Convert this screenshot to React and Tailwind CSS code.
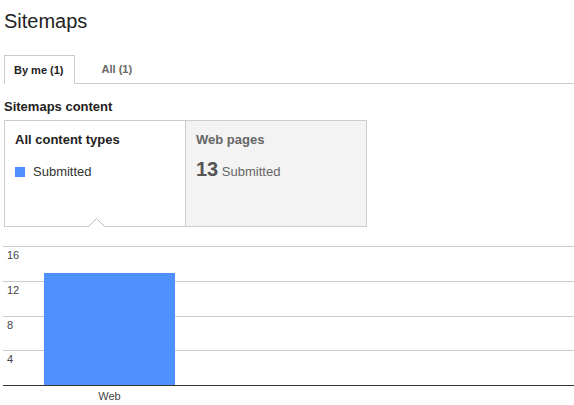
import React from 'react';

const rows = [
  { label: '16', h: 'h-[35px]' },
  { label: '12', h: 'h-[35px]' },
  { label: '8', h: 'h-[34px]' },
  { label: '4', h: 'h-[35px]' },
];

const max = 16;
const value = 13;
const plotHeight = 139;

const App = () => (
  <div className="w-[574px] h-[405px] bg-white overflow-hidden font-['Liberation_Sans',Arial,sans-serif] text-[#333]">
    <h1 className="ml-[4px] pt-[10px] text-[20px] leading-[23px] font-normal text-[#222]">Sitemaps</h1>

    <div className="mt-[22px] ml-[4px] flex items-end border-b border-[#ccc]">
      <div className="relative -mb-px bg-white border border-b-0 border-[#ccc] pl-[9px] pr-[10px] leading-[28px] text-[11px] font-bold text-[#222]">
        By me (1)
      </div>
      <div className="ml-[18px] px-[9px] leading-[28px] text-[11px] font-bold text-[#666]">All (1)</div>
    </div>

    <h2 className="mt-[15px] ml-[4px] text-[13px] leading-[15px] font-bold text-[#222]">Sitemaps content</h2>

    <div className="relative mt-[6px] ml-[4px] w-[363px] h-[107px] border border-[#ccc] flex">
      <div className="w-[181px] border-r border-[#ccc] px-[10px] pt-[11px] bg-white">
        <div className="text-[13px] leading-[15px] font-bold text-[#222]">All content types</div>
        <div className="mt-[17px] flex items-center">
          <span className="w-[10px] h-[10px] bg-[#4d90fe] mr-[8px]" />
          <span className="text-[13px] leading-[15px] text-[#333]">Submitted</span>
        </div>
      </div>
      <div className="flex-1 bg-[#f3f3f3] px-[10px] pt-[11px]">
        <div className="text-[13px] leading-[15px] font-bold text-[#666]">Web pages</div>
        <div className="mt-[11px] text-[20px] leading-[23px] font-bold text-[#555]">
          13<span className="text-[13px] font-normal text-[#666]"> Submitted</span>
        </div>
      </div>
      <svg className="absolute left-[83px] bottom-[-1px]" width="17" height="9" viewBox="0 0 17 9">
        <rect x="1" y="8" width="15" height="1" fill="#fff" />
        <polyline points="0.5,8.5 8.5,0.5 16.5,8.5" fill="#fff" stroke="#bbb" strokeWidth="1" />
      </svg>
    </div>

    <div className="mt-[19px] ml-[3px] w-[571px]">
      <div className="relative">
        {rows.map((r) => (
          <div key={r.label} className={`${r.h} border-t border-[#ccc] pl-[4px] pt-[2px] text-[11px] leading-[13px] text-[#444]`}>
            {r.label}
          </div>
        ))}
        <div
          className="absolute left-[41px] bottom-0 w-[131px] bg-[#4d90fe]"
          style={{ height: Math.floor((value / max) * plotHeight) }}
        />
      </div>
      <div className="border-t border-[#333]" />
      <div className="ml-[41px] w-[131px] pt-[4px] text-center text-[11px] leading-[13px] text-[#444]">Web</div>
    </div>
  </div>
);

export default App;
